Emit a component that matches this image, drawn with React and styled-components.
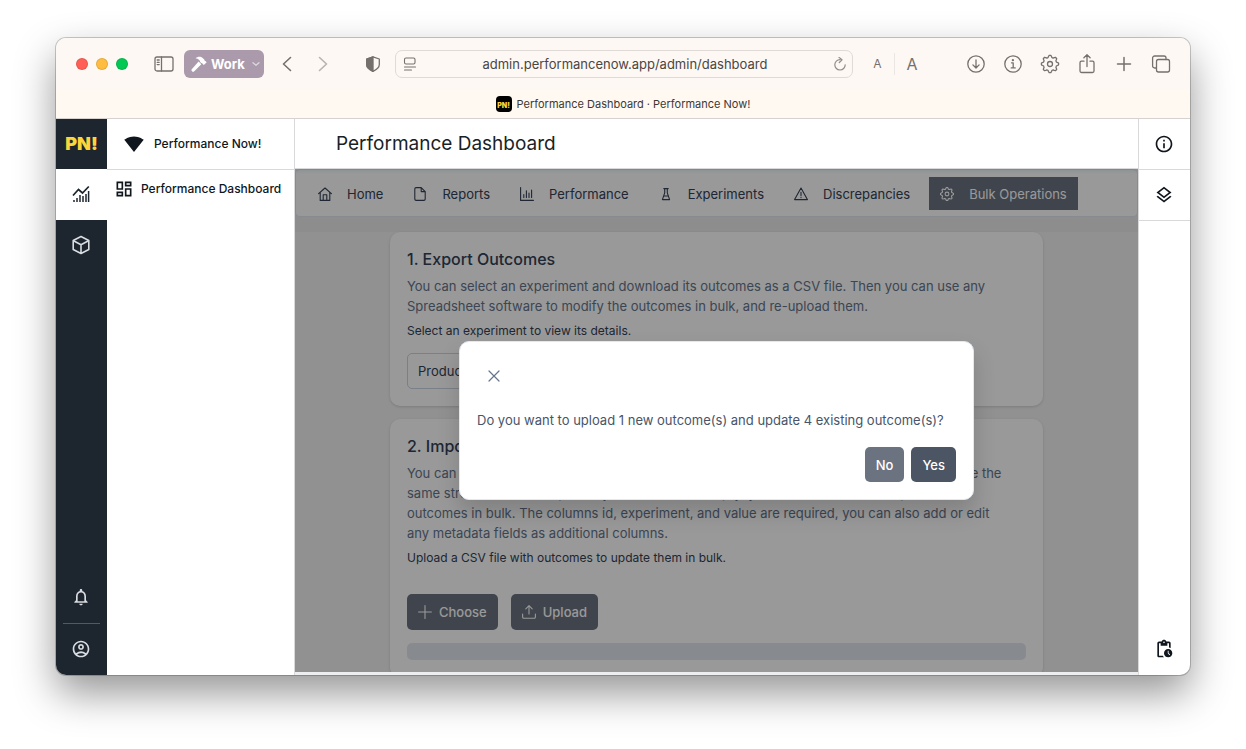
import styled, { createGlobalStyle, css } from 'styled-components'
import {
  MdOutlineNotifications,
  MdOutlineAccountCircle,
  MdOutlineInfo,
  MdOutlineLayers,
  MdOutlinePendingActions,
  MdOutlineDashboard,
  MdSignalWifi4Bar,
} from 'react-icons/md'

const GlobalStyle = createGlobalStyle`
  * {
    box-sizing: border-box;
  }
  html, body, #root {
    height: 100%;
  }
  body {
    margin: 0;
    background: #fff;
    color: #1f2937;
    font-family: Inter, 'Liberation Sans', sans-serif;
    font-size: 13px;
    line-height: 20px;
  }
  button, input, select {
    font: inherit;
    color: inherit;
  }
  button {
    border: 0;
    padding: 0;
    background: none;
    cursor: pointer;
  }
  a {
    color: inherit;
    text-decoration: none;
  }
  h1, h2, p, ul {
    margin: 0;
    padding: 0;
  }
  svg {
    display: block;
    flex: none;
  }
`

const Desktop = styled.div`
  display: flex;
  height: 100%;
  padding: 38px 56px 74px;
`

const Window = styled.div`
  flex: 1;
  min-width: 0;
  display: flex;
  flex-direction: column;
  overflow: hidden;
  border-radius: 10px;
  background: #fff;
  box-shadow:
    0 0 0 1px rgba(0, 0, 0, 0.2),
    0 18px 40px rgba(0, 0, 0, 0.42);
`

/* ---------- browser chrome ---------- */

const Toolbar = styled.div`
  flex: none;
  display: flex;
  align-items: center;
  height: 52px;
  padding: 0 19px 0 20px;
  background: #fdf8f4;
  color: #76706c;
`

const Lights = styled.div`
  display: flex;
  gap: 8px;
  margin-right: 26px;
`

const Light = styled.span`
  width: 12px;
  height: 12px;
  border-radius: 50%;
  border: 1px solid rgba(0, 0, 0, 0.1);
  background: ${({ $color }) => $color};
`

const Profile = styled.button`
  display: flex;
  align-items: center;
  gap: 4px;
  height: 28px;
  margin: 0 15px 0 10px;
  padding: 0 4px 0 7px;
  border-radius: 6px;
  background: #ab9aab;
  color: #fff;
  font-weight: 700;
  span {
    margin-right: 3px;
  }
`

const History = styled.div`
  display: flex;
  gap: 20px;
  margin-right: 34px;
  button:last-child {
    opacity: 0.5;
  }
`

const AddressBar = styled.label`
  flex: 1;
  display: flex;
  align-items: center;
  height: 28px;
  margin: 0 8px 0 14px;
  padding: 0 5px 0 7px;
  border: 1px solid #dfdad6;
  border-radius: 7px;
`

const Address = styled.input`
  flex: 1;
  min-width: 0;
  border: 0;
  padding: 0;
  outline: none;
  background: transparent;
  color: #4a4643;
  text-align: center;
`

const TextSize = styled.div`
  display: flex;
  align-items: center;
  margin-right: 37px;
  button {
    width: 34px;
    height: 22px;
    font-size: 12px;
  }
  button:first-child {
    border-right: 1px solid #ece6e2;
  }
  button:last-child {
    font-size: 16px;
  }
`

const ToolbarActions = styled.div`
  display: flex;
  align-items: center;
  gap: 17px;
`

const TabBar = styled.div`
  flex: none;
  display: flex;
  align-items: center;
  justify-content: center;
  gap: 5px;
  height: 29px;
  border-bottom: 1px solid #d5d2cf;
  background: #fff9f2;
  color: #3c3836;
  font-size: 11px;
`

const Favicon = styled.span`
  display: grid;
  place-items: center;
  width: 16px;
  height: 16px;
  border-radius: 4px;
  background: #000;
  color: #ffd43b;
  font-size: 7px;
  font-weight: 900;
`

/* ---------- application ---------- */

const AppShell = styled.div`
  flex: 1;
  min-height: 0;
  display: flex;
`

const Rail = styled.nav`
  flex: none;
  display: flex;
  flex-direction: column;
  width: 51px;
  background: #1d252e;
  color: #d9dce0;
`

const railCell = css`
  display: grid;
  place-items: center;
  width: 100%;
  height: 51px;
  padding: 0 1px 1px 0;
`

const RailLogo = styled.a`
  ${railCell}
  height: 50px;
  padding: 0;
  color: #ffd43b;
  font-size: 18px;
  font-weight: 900;
`

const RailButton = styled.button`
  ${railCell}
  ${({ $active }) =>
    $active &&
    css`
      background: #fff;
      color: #1d252e;
    `}
`

const Spacer = styled.div`
  flex: 1;
`

const RailDivider = styled.hr`
  width: 37px;
  margin: 0 auto;
  border: 0;
  border-top: 1px solid #525961;
`

const SidePanel = styled.aside`
  flex: none;
  width: 188px;
  border-right: 1px solid #d9d9dc;
  color: #10161d;
  font-size: 12px;
  font-weight: 500;
`

const Workspace = styled.div`
  display: flex;
  align-items: center;
  gap: 10px;
  height: 51px;
  padding: 0 17px;
  border-bottom: 1px solid #d9d9dc;
`

const SideLink = styled.a`
  display: flex;
  align-items: center;
  gap: 7px;
  height: 37px;
  padding-left: 7px;
`

const Main = styled.main`
  flex: 1;
  min-width: 0;
  display: flex;
  flex-direction: column;
  background: #eceef0;
`

const Header = styled.header`
  flex: none;
  display: flex;
  align-items: center;
  height: 50px;
  padding: 1px 41px 0;
  border-bottom: 1px solid #d9d9dc;
  background: #fff;
  h1 {
    color: #1a1f26;
    font-size: 19px;
    font-weight: 400;
  }
`

const Stage = styled.section`
  position: relative;
  flex: 1;
  min-height: 0;
  display: flex;
  flex-direction: column;
  overflow: hidden;
  margin-bottom: 3px;
  background: #f2f2f4;
`

const MenuStrip = styled.div`
  flex: none;
  padding-bottom: 15px;
  background: #ececec;
`

const Menu = styled.ul`
  display: flex;
  align-items: center;
  gap: 8px;
  height: 48px;
  padding: 1px 11px 0;
  border: 1px solid #e2e8f0;
  border-top-color: #cfe6ea;
  border-radius: 5px;
  background: linear-gradient(#ecf7f8, #fff 4px);
  list-style: none;
`

const MenuLink = styled.a`
  display: flex;
  align-items: center;
  gap: 15px;
  height: 33px;
  padding: 0 11px;
  color: #334155;
  ${({ $active }) =>
    $active &&
    css`
      background: #6b7280;
      color: #fff;
    `}
`

const Cards = styled.div`
  display: flex;
  flex-direction: column;
  gap: 13px;
  padding: 0 95px;
`

const Card = styled.article`
  padding: 17px;
  border-radius: 10px;
  background: #fff;
  box-shadow: 0 1px 3px rgba(0, 0, 0, 0.15);
`

const CardTitle = styled.h2`
  margin-bottom: 7px;
  color: #334155;
  font-size: 16px;
  font-weight: 500;
`

const CardText = styled.p`
  padding-right: 12px;
  color: #64748b;
`

const Hint = styled.label`
  display: block;
  margin: 5px 0 12px;
  color: #334155;
  font-size: 12px;
`

const Select = styled.select`
  display: block;
  width: 240px;
  height: 36px;
  padding: 0 10px;
  border: 1px solid #cbd5e1;
  border-radius: 5px;
  appearance: none;
  background: #fff;
  color: #334155;
`

const Actions = styled.div`
  display: flex;
  gap: ${({ $gap }) => $gap}px;
  justify-content: ${({ $end }) => ($end ? 'flex-end' : 'flex-start')};
`

const Button = styled.button`
  display: flex;
  align-items: center;
  gap: 7px;
  height: ${({ $compact }) => ($compact ? 35 : 36)}px;
  padding: 0 11px;
  border-radius: 5px;
  background: ${({ $primary }) => ($primary ? '#4b5563' : '#6b7280')};
  color: #fff;
  font-weight: 500;
`

const UploadArea = styled.div`
  padding-top: 14px;
`

const Track = styled.div`
  height: 17px;
  margin-top: 13px;
  border-radius: 5px;
  background: #e2e8f0;
`

const Mask = styled.div`
  position: absolute;
  inset: 0;
  display: flex;
  align-items: center;
  justify-content: center;
  background: rgba(0, 0, 0, 0.4);
`

const Dialog = styled.div`
  min-width: 515px;
  padding: 17px;
  border: 1px solid #e2e8f0;
  border-radius: 10px;
  background: #fff;
  color: #475569;
  box-shadow: 0 12px 22px rgba(0, 0, 0, 0.16);
  p {
    margin: 18px 0 17px;
  }
`

const CloseButton = styled.button`
  display: grid;
  place-items: center;
  width: 33px;
  height: 33px;
  color: #64748b;
`

const RightRail = styled.aside`
  flex: none;
  display: flex;
  flex-direction: column;
  width: 52px;
  border-left: 1px solid #d9d9dc;
  color: #10161d;
`

const RightButton = styled.button`
  ${railCell}
  border-bottom: ${({ $ruled }) => ($ruled ? '1px solid #d9d9dc' : '0')};
`

/* ---------- icons ---------- */

const Stroke = ({ size = 14, box = 14, width = 1.1, children }) => (
  <svg
    width={size}
    height={size}
    viewBox={`0 0 ${box} ${box}`}
    fill="none"
    stroke="currentColor"
    strokeWidth={width}
    strokeLinecap="round"
    strokeLinejoin="round"
    aria-hidden="true"
  >
    {children}
  </svg>
)

const gearPath = (c, inner, outer) => {
  const points = []
  for (let i = 0; i < 64; i++) {
    const a = (i / 64) * Math.PI * 2
    const k = Math.max(-1, Math.min(1, Math.cos(a * 8) * 1.8))
    const r = inner + ((outer - inner) * (k + 1)) / 2
    points.push(`${(c + r * Math.sin(a)).toFixed(2)} ${(c - r * Math.cos(a)).toFixed(2)}`)
  }
  return `M${points.join('L')}Z`
}

const SidebarIcon = () => (
  <Stroke size={20} box={20} width={1.3}>
    <rect x="1" y="3" width="18" height="14" rx="2" />
    <path d="M7.5 3v14M3.2 6h2M3.2 8.3h2M3.2 10.6h2" />
  </Stroke>
)

const HammerIcon = () => (
  <svg width="16" height="16" viewBox="0 0 16 16" fill="currentColor" aria-hidden="true">
    <path d="M4.6 2.2C6.8.2 9.8.2 11.7 2l1.5 1.5c.4.4.2 1 .6 1.3l.6.1 1.3 1.3-2.9 2.9-1.3-1.3c-.1-.7-.6-1-1.3-.9L9.2 5.900C9 4.200 7.500 2.700 4.600 2.200z" />
    <path d="M7.600 5.600l2.700 2.700-7 7c-.7.700-1.600.7-2.300 0s-.7-1.700 0-2.400z" />
  </svg>
)

const ChevronDown = () => (
  <Stroke size={8} box={8} width={1.3}>
    <path d="M1 2.7L4 5.3L7 2.7" opacity="0.6" />
  </Stroke>
)

const BackIcon = () => (
  <Stroke size={16} box={16} width={1.6}>
    <path d="M11.5 1.5L4.5 8l7 6.5" />
  </Stroke>
)

const ForwardIcon = () => (
  <Stroke size={16} box={16} width={1.6}>
    <path d="M4.5 1.5L11.5 8l-7 6.5" />
  </Stroke>
)

const ShieldIcon = () => (
  <Stroke size={16} box={16} width={1.3}>
    <path d="M8 .8l6.3 2.2v5.5c0 3.2-2.7 5.2-6.3 6.9-3.6-1.7-6.3-3.7-6.3-6.9V3z" />
    <path d="M8 .8v14.6C4.4 13.7 1.7 11.7 1.7 8.5V3z" fill="currentColor" />
  </Stroke>
)

const ReaderIcon = () => (
  <Stroke>
    <rect x="1.5" y="1" width="10.5" height="6" rx="1.5" />
    <path d="M1.5 10h11M1.5 13h7" />
  </Stroke>
)

const ReloadIcon = () => (
  <Stroke width={1.2}>
    <path d="M7 2.6a5.2 5.2 0 1 0 5.2 5.2M6 .4l3 2.4-2.7 2.7" opacity="0.8" />
  </Stroke>
)

const DownloadIcon = () => (
  <Stroke size={20} box={20} width={1.3}>
    <circle cx="10" cy="10" r="8.2" />
    <path d="M10 5.8v8M6.9 10.9l3.1 3.1 3.1-3.1" />
  </Stroke>
)

const CircleInfoIcon = () => (
  <Stroke size={20} box={20} width={1.3}>
    <circle cx="10" cy="10" r="8.2" />
    <path d="M8.5 8.8h1.7v5M8.2 13.9h4" />
    <circle cx="9.9" cy="6.2" r="0.5" fill="currentColor" />
  </Stroke>
)

const BrowserGearIcon = () => (
  <Stroke size={20} box={20} width={1.3}>
    <path d={gearPath(10, 6.7, 8.6)} />
    <circle cx="10" cy="10" r="2.5" />
  </Stroke>
)

const ShareIcon = () => (
  <Stroke size={20} box={20} width={1.3}>
    <path d="M7 7.2H4.5a1.5 1.5 0 0 0-1.5 1.5v8.3a1.5 1.5 0 0 0 1.5 1.5h11a1.5 1.5 0 0 0 1.5-1.5V8.7a1.5 1.5 0 0 0-1.5-1.5H13M10 12.5V1M6.9 3.8L10 .8l3.1 3" />
  </Stroke>
)

const NewTabIcon = () => (
  <Stroke size={20} box={20} width={1.5}>
    <path d="M10 3.5v13M3.5 10h13" />
  </Stroke>
)

const TabsIcon = () => (
  <Stroke size={20} box={20} width={1.3}>
    <rect x="5.5" y="5.5" width="13" height="12.5" rx="2" />
    <path d="M5.5 14H3.6a2 2 0 0 1-2-2V4a2 2 0 0 1 2-2h9.4a2 2 0 0 1 2 2v1.5" />
  </Stroke>
)

const AnalyticsIcon = () => (
  <svg width="18" height="18" viewBox="0 0 18 18" fill="none" stroke="currentColor" strokeWidth="1.7" aria-hidden="true">
    <path d="M1 10.5L6.5 4.5L10.5 8L16.8 1.5" />
    <path d="M2 17v-2M5 17v-4M8 17v-7M11 17v-6M14 17V9M16.6 17V6" strokeWidth="1.5" />
  </svg>
)

const PackageIcon = () => (
  <Stroke size={20} box={20} width={1.6}>
    <path d="M10 1.5l7.8 4v9L10 18.5l-7.8-4v-9zM2.5 5.8L10 9.7l7.5-3.9M10 9.7v8.5" />
  </Stroke>
)

const HomeIcon = () => (
  <Stroke>
    <path d="M.6 6.7L7 1l6.4 5.7M2.2 5.5v7.900h9.600V5.500M5.200 13.200V7.800h3.600v5.400" />
  </Stroke>
)

const FileIcon = () => (
  <Stroke>
    <path d="M8.2.6H3.1c-.8 0-1.3.5-1.3 1.3v10.2c0 .8.5 1.3 1.3 1.3h7.8c.8 0 1.3-.5 1.3-1.3V4.6zM8.2.6v4h4" />
  </Stroke>
)

const ChartIcon = () => (
  <Stroke>
    <path d="M.6.6v12.8h12.8M3.8 10.5V7.5M6.4 10.5V3.8M9 10.5V6M11.6 10.5V3" />
  </Stroke>
)

const FlaskIcon = () => (
  <Stroke>
    <path d="M4.8 1.6h4.4M5.7 1.6v4.3L3.4 12.6h7.2L8.3 5.9V1.6M4.7 9h4.6" />
  </Stroke>
)

const WarningIcon = () => (
  <Stroke>
    <path d="M7 1L13.4 12.6H.6zM7 5.2v3.4M7 10.4v.2" />
  </Stroke>
)

const GearIcon = () => (
  <Stroke>
    <path d={gearPath(7, 5, 6.5)} />
    <circle cx="7" cy="7" r="1.9" />
  </Stroke>
)

const PlusIcon = () => (
  <Stroke>
    <path d="M7 .6v12.8M.6 7h12.8" />
  </Stroke>
)

const UploadIcon = () => (
  <Stroke>
    <path d="M7 9V.7M3.8 3.8L7 .6l3.2 3.2M.6 9v3c0 .8.6 1.3 1.3 1.3h10.2c.8 0 1.3-.6 1.3-1.3V9" />
  </Stroke>
)

const CloseIcon = () => (
  <Stroke size={12} box={12} width={1.2}>
    <path d="M1 1l10 10M11 1L1 11" />
  </Stroke>
)

const menuItems = [
  { label: 'Home', Icon: HomeIcon },
  { label: 'Reports', Icon: FileIcon },
  { label: 'Performance', Icon: ChartIcon },
  { label: 'Experiments', Icon: FlaskIcon },
  { label: 'Discrepancies', Icon: WarningIcon },
  { label: 'Bulk Operations', Icon: GearIcon, active: true },
]

const BrowserChrome = () => (
  <>
    <Toolbar>
      <Lights>
        <Light $color="#ff5f57" />
        <Light $color="#febc40" />
        <Light $color="#00c853" />
      </Lights>
      <button aria-label="Sidebar">
        <SidebarIcon />
      </button>
      <Profile>
        <HammerIcon />
        <span>Work</span>
        <ChevronDown />
      </Profile>
      <History>
        <button aria-label="Back">
          <BackIcon />
        </button>
        <button aria-label="Forward">
          <ForwardIcon />
        </button>
      </History>
      <button aria-label="Privacy">
        <ShieldIcon />
      </button>
      <AddressBar>
        <ReaderIcon />
        <Address aria-label="Address" defaultValue="admin.performancenow.app/admin/dashboard" />
        <ReloadIcon />
      </AddressBar>
      <TextSize>
        <button>A</button>
        <button>A</button>
      </TextSize>
      <ToolbarActions>
        <button aria-label="Downloads"><DownloadIcon /></button>
        <button aria-label="Info"><CircleInfoIcon /></button>
        <button aria-label="Settings"><BrowserGearIcon /></button>
        <button aria-label="Share"><ShareIcon /></button>
        <button aria-label="New tab"><NewTabIcon /></button>
        <button aria-label="Tabs"><TabsIcon /></button>
      </ToolbarActions>
    </Toolbar>
    <TabBar>
      <Favicon>PN!</Favicon>
      <span>Performance Dashboard · Performance Now!</span>
    </TabBar>
  </>
)

const App = () => {
  return (
    <>
      <GlobalStyle />
      <Desktop>
        <Window>
          <BrowserChrome />
          <AppShell>
            <Rail>
              <RailLogo href="#">PN!</RailLogo>
              <RailButton $active aria-label="Analytics">
                <AnalyticsIcon />
              </RailButton>
              <RailButton aria-label="Packages">
                <PackageIcon />
              </RailButton>
              <Spacer />
              <RailButton aria-label="Notifications">
                <MdOutlineNotifications size={20} />
              </RailButton>
              <RailDivider />
              <RailButton aria-label="Account">
                <MdOutlineAccountCircle size={20} />
              </RailButton>
            </Rail>
            <SidePanel>
              <Workspace>
                <MdSignalWifi4Bar size={20} />
                Performance Now!
              </Workspace>
              <SideLink href="#">
                <MdOutlineDashboard size={20} />
                Performance Dashboard
              </SideLink>
            </SidePanel>
            <Main>
              <Header>
                <h1>Performance Dashboard</h1>
              </Header>
              <Stage>
                <MenuStrip>
                  <Menu>
                    {menuItems.map(({ label, Icon, active }) => (
                      <li key={label}>
                        <MenuLink href="#" $active={active}>
                          <Icon />
                          {label}
                        </MenuLink>
                      </li>
                    ))}
                  </Menu>
                </MenuStrip>
                <Cards>
                  <Card>
                    <CardTitle>1. Export Outcomes</CardTitle>
                    <CardText>
                      You can select an experiment and download its outcomes as a CSV file. Then you can use any
                      Spreadsheet software to modify the outcomes in bulk, and re-upload them.
                    </CardText>
                    <Hint htmlFor="experiment">Select an experiment to view its details.</Hint>
                    <Select id="experiment">
                      <option>Product</option>
                    </Select>
                  </Card>
                  <Card>
                    <CardTitle>2. Import Outcomes</CardTitle>
                    <CardText>
                      You can also re-upload a CSV file with the outcomes you want to update. Each file must have the
                      same structure as the export. If you leave the id empty, you can also add new experiment
                      outcomes in bulk. The columns id, experiment, and value are required, you can also add or edit
                      any metadata fields as additional columns.
                    </CardText>
                    <Hint as="p">Upload a CSV file with outcomes to update them in bulk.</Hint>
                    <UploadArea>
                      <Actions $gap={13}>
                        <Button><PlusIcon />Choose</Button>
                        <Button><UploadIcon />Upload</Button>
                      </Actions>
                      <Track />
                    </UploadArea>
                  </Card>
                </Cards>
                <Mask>
                  <Dialog role="dialog" aria-modal="true">
                    <CloseButton aria-label="Close">
                      <CloseIcon />
                    </CloseButton>
                    <p>Do you want to upload 1 new outcome(s) and update 4 existing outcome(s)?</p>
                    <Actions $gap={7} $end>
                      <Button $compact>No</Button>
                      <Button $compact $primary>Yes</Button>
                    </Actions>
                  </Dialog>
                </Mask>
              </Stage>
            </Main>
            <RightRail>
              <RightButton $ruled aria-label="Details">
                <MdOutlineInfo size={20} />
              </RightButton>
              <RightButton $ruled aria-label="Layers">
                <MdOutlineLayers size={20} />
              </RightButton>
              <Spacer />
              <RightButton aria-label="History">
                <MdOutlinePendingActions size={20} />
              </RightButton>
            </RightRail>
          </AppShell>
        </Window>
      </Desktop>
    </>
  )
}

export default App
